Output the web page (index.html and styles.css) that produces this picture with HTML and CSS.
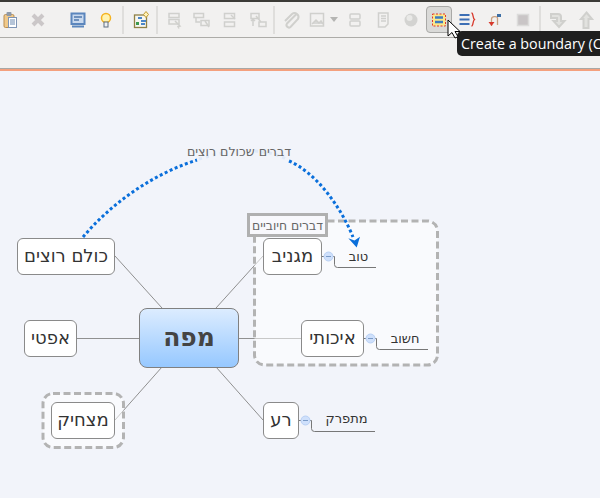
FILE: index.html
```html
<!DOCTYPE html>
<html lang="he">
<head>
<meta charset="utf-8">
<title>XMind</title>
<link rel="stylesheet" href="styles.css">
</head>
<body>
<div class="app">
  <div class="topbar"></div>
  <div class="toolbar">
    <span class="slot first"><svg width="24" height="24"><rect x="6" y="6.500" width="10" height="13" rx="1.500" fill="#f0c98a" stroke="#b98d50"/><rect x="8.500" y="4" width="5" height="4" rx="1" fill="#8f9aa8"/><rect x="10.500" y="9.500" width="8" height="10" fill="#fff" stroke="#7f95b5"/><path d="M12 12h5M12 14h5M12 16h5" stroke="#6d8ab0"/></svg></span>
    <span class="slot"><svg width="24" height="24"><path d="M7 7l10 10M17 7L7 17" stroke="#cbc7c8" stroke-width="4"/></svg></span>
    <span class="gap"></span>
    <span class="slot"><svg width="24" height="24"><rect x="5.500" y="5.500" width="13" height="10.500" fill="#c9d9ee" stroke="#5b86bd" stroke-width="2"/><path d="M8 9h8M8 12h5" stroke="#4f78ad" stroke-width="1.500"/><path d="M6 18.500h12" stroke="#5b86bd" stroke-width="2"/></svg></span>
    <span class="slot"><svg width="24" height="24"><circle cx="12" cy="10" r="4.500" fill="#fff3b0" stroke="#f5b320" stroke-width="1.500"/><rect x="10" y="14" width="4" height="5" fill="#eef0f3" stroke="#5f6f80"/></svg></span>
    <span class="sep wide-sep"></span>
    <span class="slot"><svg width="24" height="24"><rect x="5.500" y="7" width="12" height="12.500" fill="#f6f6f0" stroke="#8f8045" stroke-width="1.300"/><path d="M9 10h4M12 13h5M12 16h4" stroke="#4a86c8" stroke-width="2"/><rect x="7" y="14" width="3" height="3" fill="#3d9a4f"/><path d="M17 3.500l2.500 3-2.500 3-2.500-3z" fill="#fff2b8" stroke="#c09a30"/></svg></span>
    <span class="sep"></span>
    <span class="slot"><svg width="24" height="24" class="off"><rect x="7" y="5.500" width="10" height="4"/><rect x="7" y="11.500" width="10" height="4.500"/><path d="M13 13l5 5-2 .5 1 2"/></svg></span>
    <span class="slot"><svg width="24" height="24" class="off"><rect x="4" y="5.500" width="9.500" height="4"/><path d="M6 10v4h4"/><rect x="11" y="12.500" width="8" height="5"/><path d="M15 13l4 6"/></svg></span>
    <span class="slot"><svg width="24" height="24" class="off"><rect x="6.500" y="5.500" width="10" height="5"/><rect x="6.500" y="14" width="10" height="4.500"/><path d="M13 7l4 4"/></svg></span>
    <span class="slot"><svg width="24" height="24" class="off"><rect x="5" y="5.500" width="8" height="5"/><path d="M7 11v7M5 13l2-2 2 2"/><rect x="13" y="14" width="7" height="4.500"/><path d="M10 8l5 6"/></svg></span>
    <span class="sep"></span>
    <span class="slot"><svg width="24" height="24" class="off strong"><path d="M17 6.500L8 15.500a2.500 2.500 0 0 0 3.500 3.500L19 11a4 4 0 0 0-6-5L6 13" fill="none"/></svg></span>
    <span class="slot wide"><svg width="24" height="24" class="off"><rect x="3.500" y="5.500" width="13" height="12.500"/><path d="M5 16l4-4 3 3 2-2 2 3" fill="#d8d8d6"/></svg><i class="caret"></i></span>
    <span class="slot"><svg width="24" height="24" class="off"><rect x="7" y="6" width="10" height="5" rx="1"/><rect x="7" y="13" width="10" height="5" rx="1"/></svg></span>
    <span class="slot"><svg width="24" height="24" class="off"><path d="M7.500 5h9.500v11l-3 3H7.500z"/><path d="M10 8h5M10 10.500h5M10 13h5"/></svg></span>
    <span class="slot"><svg width="24" height="24"><circle cx="12" cy="12" r="6.500" fill="#d3d3d1"/><circle cx="10.500" cy="10" r="3" fill="#e9e9e7"/></svg></span>
    <span class="slot"><span class="active"><svg width="24" height="24"><rect x="5.500" y="6" width="13" height="12" fill="#fbe88a" stroke="#e0382b" stroke-dasharray="2 1.500"/><path d="M8 9.500h8M8 14h8" stroke="#3d7cc0" stroke-width="2.500"/></svg></span></span>
    <span class="slot"><svg width="24" height="24"><path d="M4.500 7h10M4.500 11.500h10M4.500 16h10" stroke="#3d6fb5" stroke-width="2"/><path d="M16.500 5c2 0 1 5 3 6.500-2 1.500-1 6.500-3 6.500" fill="none" stroke="#d8392c" stroke-width="1.300"/></svg></span>
    <span class="slot"><svg width="24" height="24"><path d="M8.500 18v-7c0-3 6-3 6-1v7" fill="none" stroke="#c9a080" stroke-width="1.300"/><path d="M5.500 14h6l-3 4z" fill="#d8392c"/><rect x="14" y="6" width="4" height="3" fill="#3d6fa5"/></svg></span>
    <span class="slot"><svg width="24" height="24"><rect x="6.500" y="6.500" width="11" height="11" fill="#c9c5c6" stroke="#dcdcda" stroke-width="1.500"/></svg></span>
    <span class="sep wide-sep"></span>
    <span class="slot"><svg width="24" height="24" class="off strong"><path d="M5 6h7a3 3 0 0 1 3 3v4h3.500L13 19l-5.500-6H11V10H5z"/></svg></span>
    <span class="slot"><svg width="24" height="24" class="off strong"><path d="M12.500 4.500L18 11h-3.500v9h-5v-9H7z"/></svg></span>
  </div>
  <div class="strip"></div>
  <div class="canvas">
    <svg class="map" width="600" height="427" viewBox="0 71 600 427">
      <g class="lines">
        <path d="M115 256L162 308M77 338.500H139M115 420L162 367M216 308L263 256M239 338.500H301M216 367L263 420"/>
      </g>
      <rect class="boundary" x="254.500" y="221" width="183" height="144" rx="10"/>
      <rect class="boundary" x="43" y="393.500" width="80.500" height="54" rx="10"/>
      <g class="subs">
        <path d="M333 256.500h1.500v8a3 3 0 0 0 3 3H376"/>
        <path d="M375 338.500h1.500v8a3 3 0 0 0 3 3H428"/>
        <path d="M310 420.500h1.500v8a3 3 0 0 0 3 3H375"/>
        <path d="M321.500 256.500H324M363.500 338.500H366M298.500 420.500H301"/>
      </g>
      <g class="minus">
        <circle cx="328.500" cy="256.500" r="4.500"/><path d="M326 256.500h5"/>
        <circle cx="370.500" cy="338.500" r="4.500"/><path d="M368 338.500h5"/>
        <circle cx="305.500" cy="420.500" r="4.500"/><path d="M303 420.500h5"/>
      </g>
      <path class="fade" d="M199 159Q212 155 224 153M255 151Q272 152 286 159"/>
      <path class="rel" d="M83 237C110 205 150 175 197 160"/>
      <path class="rel" d="M289 161C315 172 340 205 353 237"/>
      <path class="head" d="M348.300 238.300L354.500 240.500 360 236.700 356.700 247.500z"/>
    </svg>
    <div class="node n1">כולם רוצים</div>
    <div class="node n2">מגניב</div>
    <div class="node n3">אפטי</div>
    <div class="node n4">מצחיק</div>
    <div class="node n5">איכותי</div>
    <div class="node n6">רע</div>
    <div class="root">מפה</div>
    <div class="sub s1">טוב</div>
    <div class="sub s2">חשוב</div>
    <div class="sub s3">מתפרק</div>
    <div class="rel-label">דברים שכולם רוצים</div>
    <div class="b-label">דברים חיוביים</div>
  </div>
</div>
<div class="tooltip">Create a boundary (C</div>
<svg class="cursor" width="14" height="22" viewBox="0 0 14 22"><path d="M1 1v16l4-3.500 3 5.500 3-1.300-3-5.200h5z" fill="#fff" stroke="#000"/></svg>
</body>
</html>
```
FILE: styles.css
```css
html, body {
  margin: 0;
  padding: 0;
  width: 600px;
  height: 498px;
  overflow: hidden;
  background: #f2f4fa;
}
.app {
  display: flex;
  flex-direction: column;
  height: 498px;
  width: 600px;
}
.topbar {
  height: 2px;
  background: #3c3b37;
}
.toolbar {
  display: flex;
  align-items: center;
  height: 35px;
  background: #f2f1f0;
  border-bottom: 1px solid #adaca8;
}
.slot {
  flex: none;
  width: 28px;
  height: 24px;
  display: flex;
  align-items: center;
  justify-content: center;
  position: relative;
}
.slot.first { margin-left: -4px; }
.slot.wide { width: 34px; justify-content: flex-start; padding-left: 2px; }
.gap { flex: none; width: 12px; }
.sep {
  flex: none;
  width: 2px;
  height: 28px;
  margin: 0 2px 0 1px;
  border-left: 2px solid #dfdedc;
  box-sizing: border-box;
}
.sep.wide-sep { margin: 0 3px 0 2px; }
.off {
  fill: none;
  stroke: #d0d0cd;
  stroke-width: 1.500;
}
.off.strong { stroke-width: 2; fill: #e2e2df; }
.caret {
  width: 0;
  height: 0;
  border-left: 4px solid transparent;
  border-right: 4px solid transparent;
  border-top: 5px solid #b5b5b3;
  margin-left: -1px;
}
.active {
  flex: none;
  width: 24px;
  height: 25px;
  display: flex;
  align-items: center;
  justify-content: center;
  border: 1px solid #a9a9a7;
  border-radius: 4px;
  background: #dadad8;
}
.strip {
  height: 30px;
  background: #f2f1f0;
  border-bottom: 1px solid #a8a8a5;
}
.canvas {
  flex: 1;
  position: relative;
  background: #f2f4fa;
  border-top: 2px solid #f4a07e;
}
.map {
  position: absolute;
  left: 0;
  top: 0;
}
.lines path { fill: none; stroke: #909090; stroke-width: 1; }
.boundary {
  fill: rgba(255, 255, 255, .5);
  stroke: #b3b3b3;
  stroke-width: 3;
  stroke-dasharray: 7 3.500;
}
.subs path { fill: none; stroke: #777; stroke-width: 1; }
.minus circle { fill: #cfe0fb; stroke: #b8d0f5; stroke-width: 1; }
.minus path { fill: none; stroke: #7a9bc8; stroke-width: 1; }
.rel { fill: none; stroke: #0a6fdb; stroke-width: 3; stroke-dasharray: 3 2.500; }
.fade { fill: none; stroke: #dfe9f8; stroke-width: 3; stroke-dasharray: 3 4; }
.head { fill: #0a6fdb; }
.node, .root, .sub, .rel-label, .b-label {
  position: absolute;
  box-sizing: border-box;
  display: flex;
  align-items: center;
  justify-content: center;
  direction: rtl;
  white-space: nowrap;
  font-family: "DejaVu Sans", sans-serif;
}
.node {
  height: 37px;
  padding-bottom: 2px;
  background: #fff;
  border: 1px solid #8a8a8a;
  border-radius: 6px;
  color: #333;
  font-size: 18px;
}
.n1 { left: 17px; top: 167px; width: 98px; }
.n2 { left: 263px; top: 167px; width: 59px; }
.n3 { left: 24px; top: 249px; width: 53px; }
.n4 { left: 51px; top: 331px; width: 64px; }
.n5 { left: 301px; top: 249px; width: 63px; }
.n6 { left: 263px; top: 331px; width: 36px; }
.root {
  left: 139px;
  top: 237px;
  width: 100px;
  height: 60px;
  padding-bottom: 2px;
  border: 1px solid #808080;
  border-radius: 8px;
  background: linear-gradient(#dcecff, #96c8ff);
  color: #444;
  font-size: 25px;
  font-weight: bold;
}
.sub {
  color: #333;
  font-size: 13px;
  height: 18px;
}
.s1 { left: 348px; top: 176px; width: 21px; }
.s2 { left: 389px; top: 258px; width: 32px; }
.s3 { left: 325px; top: 338px; width: 43px; }
.rel-label {
  left: 186px;
  top: 71px;
  width: 106px;
  height: 18px;
  color: #666;
  font-size: 12.600px;
}
.b-label {
  left: 247px;
  top: 142px;
  width: 81px;
  height: 24px;
  border: 3px solid #b0b0b0;
  background: #f8f8fc;
  color: #666;
  font-size: 12.400px;
}
.tooltip {
  position: absolute;
  left: 457px;
  top: 31px;
  width: 170px;
  height: 25px;
  box-sizing: border-box;
  padding-left: 4px;
  background: #1f1f1f;
  border-radius: 5px;
  color: #fff;
  font-family: "Open Sans", sans-serif;
  font-size: 14.300px;
  line-height: 25px;
  white-space: nowrap;
}
.cursor {
  position: absolute;
  left: 447px;
  top: 19px;
}
```
